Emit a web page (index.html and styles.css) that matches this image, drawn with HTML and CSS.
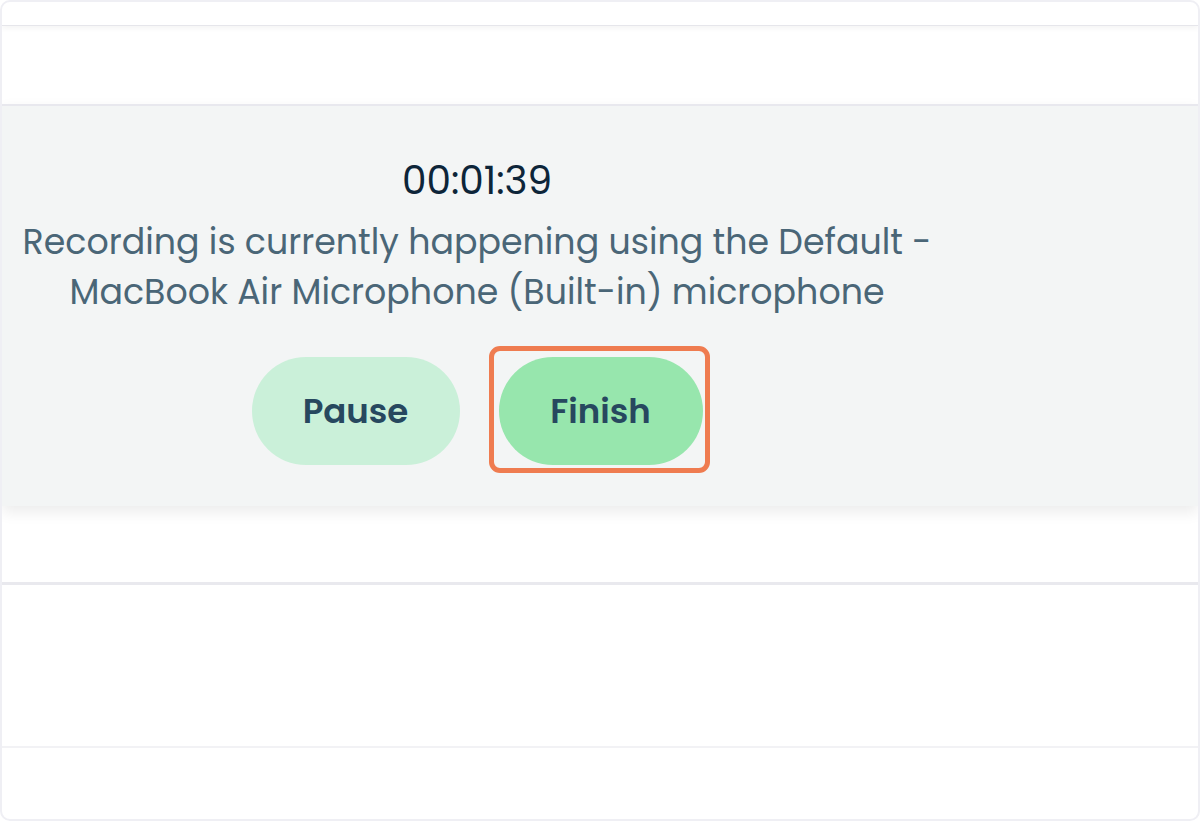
FILE: index.html
```html
<!DOCTYPE html>
<html lang="en">
<head>
    <meta charset="UTF-8">
    <meta name="viewport" content="width=device-width, initial-scale=1.0">
    <title>Recorder</title>
    <link rel="stylesheet" href="styles.css">
</head>
<body>

    <div class="frame">
        <div class="topbar"></div>
        <div class="toolbar"></div>

        <section class="recorder">
            <div class="recorder-body">
                <div class="timer" id="timer">00:01:39</div>
                <p class="status">Recording is currently happening using the Default -<br>MacBook Air Microphone (Built-in) microphone</p>
                <div class="actions">
                    <button type="button" class="btn btn-pause">Pause</button>
                    <span class="highlight">
                        <button type="button" class="btn btn-finish">Finish</button>
                    </span>
                </div>
            </div>
        </section>

        <div class="row row-short"></div>
        <div class="row row-tall"></div>
        <div class="row row-last"></div>
    </div>

</body>
</html>
```

FILE: styles.css
```css
body {
    margin: 0;
    font-family: "Poppins", "DejaVu Sans", sans-serif;
    background-color: #ffffff;
}

.frame {
    width: 1200px;
    height: 821px;
    box-sizing: border-box;
    border: 2px solid #efeff4;
    border-radius: 10px;
    overflow: hidden;
    display: flex;
    flex-direction: column;
    background-color: #ffffff;
}

.topbar {
    height: 23px;
    border-bottom: 1px solid #e6e6eb;
    box-shadow: 0 3px 5px rgba(0, 0, 0, 0.04);
    position: relative;
    z-index: 1;
}

.toolbar {
    height: 78px;
}

.recorder {
    border-top: 2px solid #e8e8ee;
    background-color: #f3f5f5;
    box-shadow: 0 6px 14px rgba(0, 0, 0, 0.08);
    position: relative;
    z-index: 1;
}

.recorder-body {
    width: 950px;
    padding: 55px 0 41px;
    text-align: center;
}

.timer {
    font-size: 39px;
    line-height: 40px;
    color: #0d2539;
}

.status {
    margin: 16px 0 0;
    font-size: 34.8px;
    line-height: 50px;
    color: #4a6677;
}

.actions {
    margin-top: 40px;
    display: flex;
    justify-content: center;
    align-items: center;
    gap: 39px;
}

.btn {
    height: 108px;
    padding: 0;
    border: none;
    border-radius: 54px;
    font-family: inherit;
    font-size: 34px;
    font-weight: 600;
    color: #27485f;
    cursor: pointer;
}

.btn-pause {
    width: 208px;
    background-color: #caf0d9;
}

.btn-finish {
    width: 204px;
    background-color: #97e6ad;
}

.highlight {
    position: relative;
    display: block;
}

/* annotation box drawn round the finish button */
.highlight::after {
    content: "";
    position: absolute;
    top: -11px;
    right: -7px;
    bottom: -8px;
    left: -10px;
    border: 5px solid #ef7c50;
    border-radius: 11px;
    pointer-events: none;
}

.row-short {
    height: 76px;
}

.row-tall {
    height: 161px;
    border-top: 3px solid #e9e9ee;
}

.row-last {
    flex: 1;
    border-top: 2px solid #f2f2f5;
}
```
